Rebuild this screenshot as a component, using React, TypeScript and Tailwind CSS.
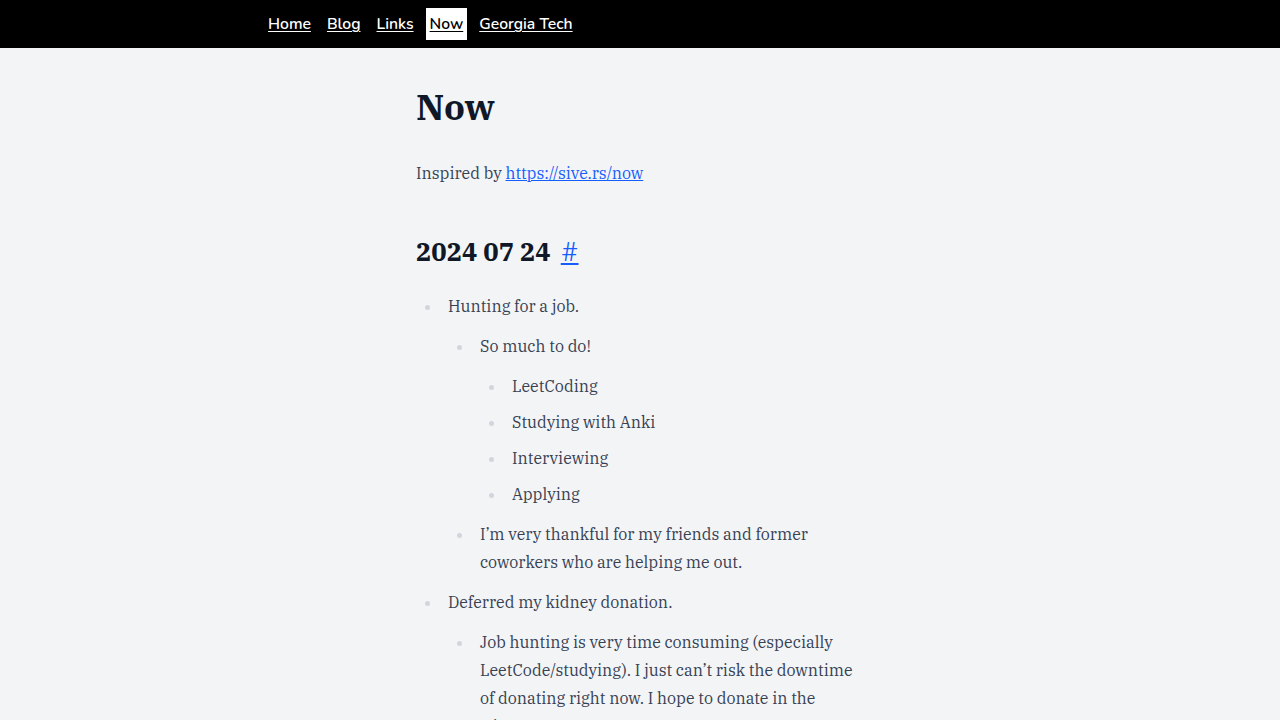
const navLinks = ["Home", "Blog", "Links", "Now", "Georgia Tech"];

const serif = "font-['IBM_Plex_Serif','DejaVu_Serif',serif]";

type Item = { text: string; children?: Item[] };

const items: Item[] = [
  {
    text: "Hunting for a job.",
    children: [
      {
        text: "So much to do!",
        children: [
          { text: "LeetCoding" },
          { text: "Studying with Anki" },
          { text: "Interviewing" },
          { text: "Applying" },
        ],
      },
      { text: "I\u2019m very thankful for my friends and former coworkers who are helping me out." },
    ],
  },
  {
    text: "Deferred my kidney donation.",
    children: [
      {
        text: "Job hunting is very time consuming (especially LeetCode/studying). I just can\u2019t risk the downtime of donating right now. I hope to donate in the winter.",
      },
    ],
  },
];

const List = ({ list, nested }: { list: Item[]; nested?: boolean }) => {
  return (
    <ul className={`list-disc pl-[26px] marker:text-gray-300 ${nested ? "my-3" : "mt-0 mb-5"}`}>
      {list.map((item) => (
        <li key={item.text} className="my-2 pl-[6px]">
          {item.text}
          {item.children && <List list={item.children} nested />}
        </li>
      ))}
    </ul>
  );
};

export default function App() {
  return (
    <div className="min-h-screen bg-gray-100">
      <header className="bg-black h-12">
        <nav className="max-w-3xl mx-auto h-full flex items-center gap-2 px-2 font-['Nunito','Lato',sans-serif] font-semibold text-[15.7px]">
          {navLinks.map((l) => (
            <a
              key={l}
              href="#"
              className={`px-1 pt-[2px] h-8 flex items-center underline underline-offset-2 ${
                l === "Now" ? "bg-white text-black" : "text-white"
              }`}
            >
              {l}
            </a>
          ))}
        </nav>
      </header>

      <main className={`max-w-md mx-auto pt-[39px] pb-16 text-base leading-7 text-gray-700 ${serif}`}>
        <h1 className="text-4xl leading-10 font-bold text-gray-900 mb-8">Now</h1>
        <p className="mb-12">
          Inspired by{" "}
          <a href="#" className="text-blue-600 underline">
            https://sive.rs/now
          </a>
        </p>
        <h2 className="pt-px text-[25.6px] leading-8 font-bold text-gray-900 mb-6">
          2024 07 24
          <a href="#" className="ml-[10px] text-blue-600 underline font-normal">
            #
          </a>
        </h2>
        <List list={items} />
      </main>
    </div>
  );
}
